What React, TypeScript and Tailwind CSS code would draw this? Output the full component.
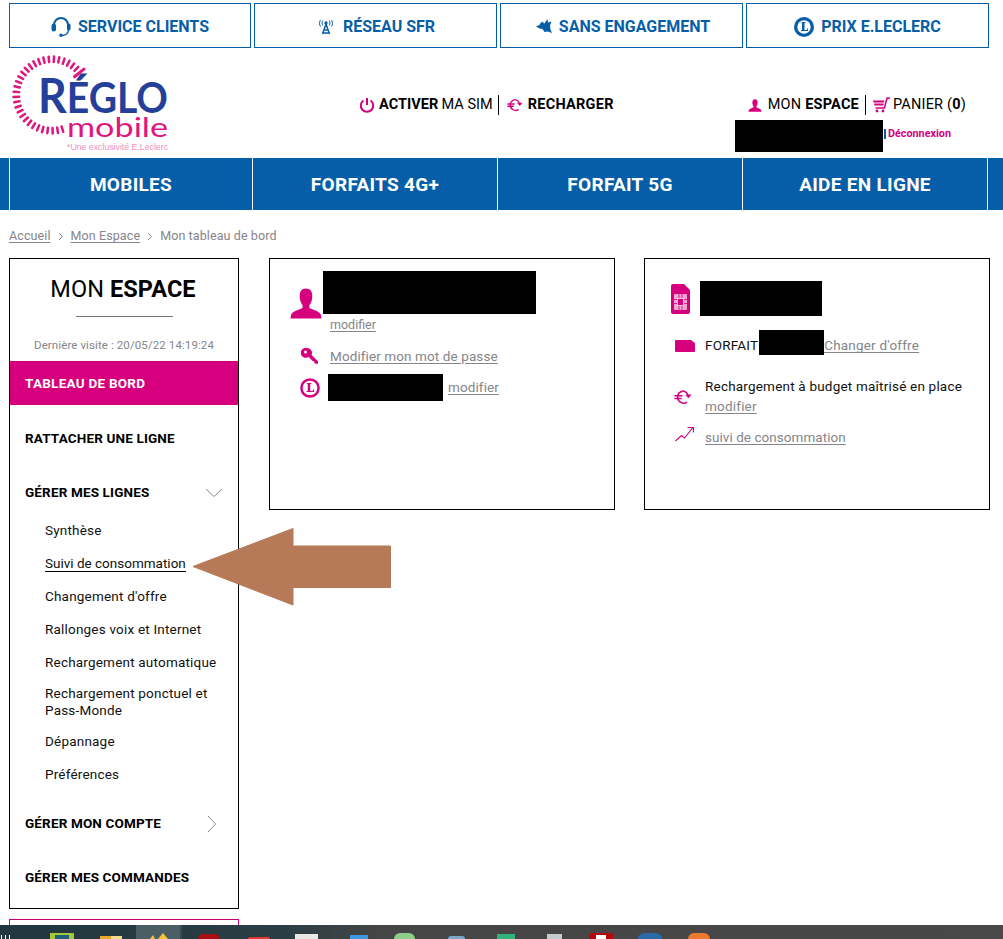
import React from "react";

const PINK = "#d6007f";

function Person({ className = "" }: { className?: string }) {
  return (
    <svg viewBox="0 0 32 32" className={className} fill="currentColor">
      <path d="M16 0.500c4.500 0 6.500 3 6.500 8 0 4-1.200 7-3 9.200v2.800c2 2 10.500 3 12 7.500l.5 3.500H0l.5-3.500C2 23.500 10.500 22.500 12.500 20.500v-2.800C10.700 15.500 9.500 12.500 9.500 8.500c0-5 2-8 6.500-8z" />
    </svg>
  );
}

function Euro({ className = "" }: { className?: string }) {
  return (
    <svg viewBox="0 0 20 20" className={className} fill="none" stroke="currentColor" strokeWidth="1.700">
      <path d="M9.500 3.500A6.800 6.800 0 0 0 4 10a6.800 6.800 0 0 0 10.500 5.700" />
      <path d="M9 3.300a6.800 6.800 0 0 1 6.500 4.700" />
      <path d="M0.500 8.700h9M0.500 11.600h8" />
      <path d="M12.500 7.300h7l-3.500 4z" fill="currentColor" stroke="none" />
    </svg>
  );
}

function LeclercL({ className = "", id }: { className?: string; id: string }) {
  return (
    <svg viewBox="0 0 24 24" className={className} aria-label={id}>
      <circle cx="12" cy="12" r="10.300" fill="none" stroke="currentColor" strokeWidth="3" />
      <path d="M8.500 6h5v1.200h-1.200v8.300h3.200v-1.800h1.300v3.100H8v-1.300h1.300V7.200H8.500z" fill="currentColor" />
    </svg>
  );
}

function TopButton({ icon, label, w }: { icon: React.ReactNode; label: string; w: string }) {
  return (
    <a className={`${w} h-[45px] border border-[#075ea8] flex items-center justify-center gap-[7px] pt-[2px] text-[#075ea8] font-bold text-[16px] uppercase`}>
      {icon}
      <span>{label}</span>
    </a>
  );
}

function Logo() {
  const ticks = [];
  for (let i = 0; i < 32; i++) {
    const a = (-39 - i * 8) * (Math.PI / 180);
    const big = i === 0;
    const r1 = big ? 29 : 33;
    const r2 = big ? 41 : 38.500;
    ticks.push(
      <line
        key={i}
        x1={40 + r1 * Math.cos(a)}
        y1={40 + r1 * Math.sin(a)}
        x2={40 + r2 * Math.cos(a)}
        y2={40 + r2 * Math.sin(a)}
        stroke="#e0157f"
        strokeWidth={big ? 3 : 2.500}
        strokeLinecap="round"
      />
    );
  }
  return (
    <svg width="160" height="98" viewBox="0 0 160 98" className="block overflow-visible">
      {ticks}
      <text x="26" y="58" fontFamily="Lato, 'Liberation Sans', sans-serif" fontWeight="700" fontSize="42" fill="#24409a" textLength="130" lengthAdjust="spacingAndGlyphs">
        <tspan fontSize="48">R</tspan>ÉGLO
      </text>
      <text x="55" y="82" fontFamily="Lato, 'Liberation Sans', sans-serif" fontWeight="400" fontSize="27" fill="#e0157f" textLength="101" lengthAdjust="spacingAndGlyphs">mobile</text>
      <text x="55" y="95" fontFamily="'Liberation Sans', sans-serif" fontSize="9" fill="#eb8fbe" textLength="101" lengthAdjust="spacingAndGlyphs">*Une exclusivité E.Leclerc</text>
    </svg>
  );
}

function SubItem({ children, active, className = "" }: { children: React.ReactNode; active?: boolean; className?: string }) {
  return (
    <div className={`pl-[35px] text-[13.500px] leading-[17px] tracking-[0.2px] text-[#111] ${className}`}>
      <span className={active ? "border-b border-black" : ""}>{children}</span>
    </div>
  );
}

function MainItem({ children, icon, className = "" }: { children: React.ReactNode; icon?: React.ReactNode; className?: string }) {
  return (
    <div className={`flex items-center justify-between pl-[15px] pr-[15px] font-bold text-[13.500px] text-black tracking-[0.15px] ${className}`}>
      <span>{children}</span>
      {icon}
    </div>
  );
}

function GreyLink({ children, className = "" }: { children: React.ReactNode; className?: string }) {
  return <a className={`text-[#85858a] underline underline-offset-2 decoration-[#85858a] ${className}`}>{children}</a>;
}

const Chevron = () => (
  <svg width="6" height="9" viewBox="0 0 6 9" fill="none" stroke="#85858a" className="mx-[7px]">
    <path d="M1 1l3.500 3.500L1 8" />
  </svg>
);

export default function App() {
  return (
    <div className="relative h-[939px] w-[1003px] overflow-hidden bg-white font-['Roboto',_'Liberation_Sans',_sans-serif] text-black">
      {/* Top buttons */}
      <div className="flex gap-[3px] pl-[9px] pt-[3px]">
        <TopButton
          w="w-[242px]"
          label="Service clients"
          icon={
            <svg width="20" height="20" viewBox="0 0 20 20" fill="none" stroke="#075ea8">
              <path d="M3 9.500V8a7 7 0 0 1 14 0v1.500" strokeWidth="2" />
              <path d="M17.500 13c-.5 3.500-3 5.500-6.500 5.500" strokeWidth="1.500" />
              <rect x="0.500" y="6.500" width="4.500" height="8" rx="2.200" fill="#075ea8" stroke="none" />
              <rect x="16" y="6.500" width="3.500" height="7" rx="1.700" fill="#075ea8" stroke="none" />
              <circle cx="10" cy="18.300" r="1.700" fill="#075ea8" stroke="none" />
            </svg>
          }
        />
        <TopButton
          w="w-[243px]"
          label="Réseau SFR"
          icon={
            <svg width="16" height="16" viewBox="0 0 16 16" fill="none" stroke="#075ea8" className="ml-[2px] mr-[2px]">
              <path d="M8 5l-3.500 10M8 5l3.500 10M6 11h4M5.500 14h5" strokeWidth="1.500" />
              <circle cx="8" cy="4" r="1.700" fill="#075ea8" stroke="none" />
              <path d="M4.800 1.500c-1 1.500-1 3.500 0 5M11.200 1.500c1 1.500 1 3.500 0 5M2.500 1c-1.300 2-1.300 4.500 0 6.500M13.500 1c1.300 2 1.300 4.500 0 6.500" strokeWidth="1" />
            </svg>
          }
        />
        <TopButton
          w="w-[243px]"
          label="Sans engagement"
          icon={
            <svg width="16" height="15" viewBox="0 0 16 15" fill="#075ea8" className="ml-[3px]">
              <path d="M0 7.500l3.500-1.500 1-2L7 2.500l1 2.500 3.500-5 .5 3.500L15.500 2.500 14 6.500l.5 4 1.500 3.500-4.500-1.500-3 .5-2-3L3.500 9.500z" />
            </svg>
          }
        />
        <TopButton
          w="w-[243px]"
          label="Prix E.Leclerc"
          icon={
            <svg width="20" height="20" viewBox="0 0 20 20">
              <circle cx="10" cy="10" r="10" fill="#075ea8" />
              <circle cx="10" cy="10" r="6.700" fill="#fff" />
              <path d="M7.500 5h4v1h-1v7h2.500v-1.500h1V14H7v-1h1V6h-.5z" fill="#075ea8" />
            </svg>
          }
        />
      </div>

      {/* Header */}
      <div className="flex h-[110px] items-start">
        <div className="ml-[12px] mt-[7px] w-[160px] shrink-0">
          <Logo />
        </div>
        <div className="ml-[187px] mt-[47px] flex h-[20px] items-center text-[14.500px] tracking-[0.05px]">
          <svg width="16" height="16" viewBox="0 0 16 16" fill="none" stroke={PINK} strokeWidth="2" className="mr-[4px]">
            <path d="M8 1v7" />
            <path d="M4.500 3.500a6.200 6.200 0 1 0 7 0" />
          </svg>
          <b>ACTIVER</b>
          <span className="ml-[3px]">MA SIM</span>
          <span className="ml-[5px] mr-[8px] h-[20px] w-px bg-black" />
          <Euro className="mr-[5px] h-[16px] w-[16px] text-[#d6007f]" />
          <b className="tracking-[0.25px]">RECHARGER</b>
        </div>
        <div className="ml-auto mr-[37px] mt-[47px] flex flex-col items-end">
          <div className="flex h-[20px] items-center text-[14.500px] tracking-[0.2px]">
            <Person className="mr-[6px] h-[13px] w-[14px] text-[#d6007f]" />
            <span>MON</span>
            <b className="ml-[4px]">ESPACE</b>
            <span className="mx-[6px] h-[20px] w-px bg-black" />
            <svg width="18" height="16" viewBox="0 0 18 16" className="mr-[3px]" fill="none" stroke={PINK}>
              <path d="M18 1h-3l-2.500 10H3.500" strokeWidth="1.500" />
              <path d="M1 3.500h11.500l-.5 2H1.500zM2 6.500h9.800l-.4 2H2.500z" fill={PINK} stroke="none" />
              <circle cx="5" cy="14" r="1.400" fill={PINK} stroke="none" />
              <circle cx="11" cy="14" r="1.400" fill={PINK} stroke="none" />
            </svg>
            <span>PANIER (<b>0</b>)</span>
          </div>
          <div className="mr-[15px] mt-[5px] flex h-[32px] items-center">
            <div className="h-[32px] w-[148px] bg-black" />
            <span className="mb-[4px] ml-px h-[10px] w-[2px] bg-[#075ea8]" />
            <span className="mb-[4px] ml-[2px] text-[10.800px] font-bold text-[#d6007f]">Déconnexion</span>
          </div>
        </div>
      </div>

      {/* Main nav */}
      <nav className="flex h-[52px] bg-[#075ea8] text-[19px] font-bold uppercase tracking-[0.3px] text-white">
        <div className="w-[9px]" />
        {[
          ["Mobiles", "w-[243px]"],
          ["Forfaits 4G+", "w-[245px]"],
          ["Forfait 5G", "w-[245px]"],
          ["Aide en ligne", "w-[245px]"],
        ].map(([label, w]) => (
          <div key={label} className={`${w} flex items-center justify-center border-l border-white pt-[3px]`}>
            {label}
          </div>
        ))}
        <div className="flex-1 border-l border-white" />
      </nav>

      {/* Breadcrumb */}
      <div className="ml-[9px] mt-[18px] flex h-[17px] items-center text-[12.500px] tracking-[0.1px] text-[#85858a]">
        <GreyLink>Accueil</GreyLink>
        <Chevron />
        <GreyLink>Mon Espace</GreyLink>
        <Chevron />
        <span>Mon tableau de bord</span>
      </div>

      {/* Body */}
      <div className="mt-[13px] flex items-start pl-[9px]">
        {/* Sidebar */}
        <div className="w-[230px] shrink-0">
          <aside className="h-[651px] border border-black">
            <div className="pr-[2px] pt-[15px] text-center text-[23.500px] leading-[30px] tracking-[0.1px]">
              MON <b>ESPACE</b>
            </div>
            <div className="mx-auto mt-[12px] h-px w-[97px] bg-[#777]" />
            <div className="mt-[20px] text-center text-[11.500px] leading-[16px] tracking-[0.1px] text-[#85858a]">
              Dernière visite : 20/05/22 14:19:24
            </div>
            <div className="mt-[8px] flex h-[44px] items-center bg-[#d6007f] pl-[15px] text-[13.500px] font-bold tracking-[0.25px] text-white">
              TABLEAU DE BORD
            </div>
            <MainItem className="mt-[25px] h-[17px]">RATTACHER UNE LIGNE</MainItem>
            <MainItem
              className="mt-[37px] h-[17px]"
              icon={
                <svg width="18" height="10" viewBox="0 0 18 10" fill="none" stroke="#888">
                  <path d="M1 1l8 7.500L17 1" />
                </svg>
              }
            >
              GÉRER MES LIGNES
            </MainItem>
            <SubItem className="mt-[21px]">Synthèse</SubItem>
            <SubItem className="mt-[16px] tracking-normal" active>Suivi de consommation</SubItem>
            <SubItem className="mt-[16px]">Changement d'offre</SubItem>
            <SubItem className="mt-[16px]">Rallonges voix et Internet</SubItem>
            <SubItem className="mt-[16px]">Rechargement automatique</SubItem>
            <SubItem className="mt-[14px] pr-[10px]">Rechargement ponctuel et Pass-Monde</SubItem>
            <SubItem className="mt-[14px]">Dépannage</SubItem>
            <SubItem className="mt-[16px]">Préférences</SubItem>
            <MainItem
              className="mt-[32px] h-[17px]"
              icon={
                <svg width="10" height="18" viewBox="0 0 10 18" fill="none" stroke="#888" className="mr-[6px]">
                  <path d="M1 1l7.500 8L1 17" />
                </svg>
              }
            >
              GÉRER MON COMPTE
            </MainItem>
            <MainItem className="mt-[37px] h-[17px]">GÉRER MES COMMANDES</MainItem>
          </aside>
          <div className="mt-[10px] h-[20px] border border-[#c7007d]" />
        </div>

        {/* Card 1 */}
        <section className="ml-[30px] h-[252px] w-[346px] shrink-0 border border-black text-[13.500px] tracking-[0.1px]">
          <div className="ml-[20px] mt-[12px] flex h-[43px]">
            <Person className="mt-[17px] h-[31px] w-[32px] text-[#d6007f]" />
            <div className="ml-[1px] h-[43px] w-[213px] bg-black" />
          </div>
          <div className="ml-[60px] mt-[2px] h-[17px] text-[12.500px] leading-[17px] tracking-normal">
            <GreyLink>modifier</GreyLink>
          </div>
          <div className="mt-[13px] flex h-[20px] items-center pl-[31px]">
            <svg width="18" height="18" viewBox="0 0 18 18" fill={PINK}>
              <path fillRule="evenodd" d="M6 1a5 5 0 0 1 4.600 7l6.400 6.300v2.400h-2.500l-1.300-1.300v-1.200h-1.300l-4.300-4.300A5 5 0 1 1 6 1zM4.500 3.500a1.500 1.500 0 1 0 0 3 1.500 1.500 0 0 0 0-3z" />
            </svg>
            <GreyLink className="ml-[11px]">Modifier mon mot de passe</GreyLink>
          </div>
          <div className="mt-[8px] flex items-center pl-[30px]">
            <LeclercL id="E.Leclerc" className="h-[20px] w-[20px] text-[#d6007f]" />
            <div className="ml-[8px] h-[27px] w-[115px] bg-black" />
            <GreyLink className="ml-[5px]">modifier</GreyLink>
          </div>
        </section>

        {/* Card 2 */}
        <section className="ml-[29px] h-[252px] w-[346px] shrink-0 border border-black text-[13.500px] tracking-[0.2px]">
          <div className="flex items-start pl-[26px] pt-[22px]">
            <svg width="19" height="30" viewBox="0 0 19 30" className="mt-[3px]">
              <path d="M2 0h11l6 6v22a2 2 0 0 1-2 2H2a2 2 0 0 1-2-2V2a2 2 0 0 1 2-2z" fill={PINK} />
              <rect x="3" y="10" width="13" height="16" rx="1" fill="#f4a6d3" />
              <rect x="6.500" y="14.500" width="6" height="7" fill={PINK} stroke="#fff" strokeWidth="0.600" />
              <path d="M8 10v4M11 10v4M8 22v4M11 22v4M3 15.500h3M3 19.500h3M13 15.500h3M13 19.500h3" stroke={PINK} strokeWidth="0.800" />
            </svg>
            <div className="ml-[10px] h-[35px] w-[122px] bg-black" />
          </div>
          <div className="mt-[14px] flex h-[25px] items-center pl-[30px]">
            <svg width="20" height="12" viewBox="0 0 20 12" fill={PINK} className="mt-[6px]">
              <path d="M1 0h15l4 3v8a1 1 0 0 1-1 1H1a1 1 0 0 1-1-1V1a1 1 0 0 1 1-1z" />
            </svg>
            <span className="ml-[10px] mt-[6px] text-[#111]">FORFAIT</span>
            <div className="ml-[1px] h-[25px] w-[65px] bg-black" />
            <GreyLink className="mt-[6px]">Changer d'offre</GreyLink>
          </div>
          <div className="mt-[21px] flex pl-[29px]">
            <Euro className="mt-[12px] h-[18px] w-[18px] text-[#d6007f]" />
            <div className="ml-[13px] leading-[20px]">
              <div className="text-[#111]">Rechargement à budget maîtrisé en place</div>
              <GreyLink>modifier</GreyLink>
            </div>
          </div>
          <div className="mt-[11px] flex items-center pl-[30px]">
            <svg width="19" height="16" viewBox="0 0 19 16" fill="none" stroke={PINK} strokeWidth="1.200" className="-mt-[6px]">
              <path d="M0.500 15l6-5.500 3 2.500L17.500 2" />
              <path d="M12.500 1.500h6v5" />
            </svg>
            <GreyLink className="ml-[11px] tracking-[0.05px]">suivi de consommation</GreyLink>
          </div>
        </section>
      </div>

      {/* Annotation arrow over the page */}
      <svg width="200" height="80" viewBox="0 0 200 80" className="absolute left-[192px] top-[527px]">
        <path d="M1 39.500L101 1.500V19H198.500V60.500H101V78z" fill="#b67a58" stroke="#b67a58" strokeLinejoin="round" strokeWidth="1" />
      </svg>

      {/* Desktop taskbar cut off by the screenshot */}
      <div className="absolute inset-x-0 bottom-0 h-[14px] bg-[linear-gradient(90deg,#21363e_0%,#2a3d44_28%,#454545_38%,#484848_100%)]">
        <div className="absolute left-[136px] top-0 h-[14px] w-[44px] bg-[#4a5e63]" />
        <div className="absolute left-[180px] top-0 h-[14px] w-[2px] bg-[#3a4a4f]" />
        <div className="absolute left-[1px] top-[10px] flex gap-[3px]">
          <span className="h-[4px] w-px bg-white" />
          <span className="h-[4px] w-px bg-white" />
          <span className="h-[4px] w-px bg-white" />
        </div>
        <div className="relative flex items-start">
          <span className="ml-[50px] mt-[8px] flex h-[6px] w-[24px] justify-center bg-[#a4c639]"><span className="mt-[2px] h-[4px] w-[14px] bg-[#1f5f7a]" /></span>
          <span className="ml-[26px] mt-[11px] h-[3px] w-[22px] bg-[linear-gradient(90deg,#e8a92c_50%,#f4d98a_50%)]" />
          <svg width="22" height="6" viewBox="0 0 22 6" className="ml-[28px] mt-[8px]"><path d="M0 6l3-4 2 4zM8 6l5-6 5 6z" fill="#f5c33a" /></svg>
          <span className="ml-[26px] mt-[9px] h-[5px] w-[22px] rounded-t-md bg-[#a80d10]" />
          <span className="ml-[28px] mt-[12px] h-[2px] w-[22px] rounded-t-full bg-[#e53a2f]" />
          <span className="ml-[25px] mt-[9px] h-[5px] w-[23px] bg-[#e8e8e4]" />
          <span className="ml-[32px] mt-[10px] h-[4px] w-[18px] bg-[#3e97dd]" />
          <span className="ml-[26px] mt-[8px] h-[6px] w-[21px] rounded-t-full bg-[#8fce8a]" />
          <span className="ml-[33px] mt-[11px] h-[3px] w-[17px] rounded-t-full bg-[#7fa8c8]" />
          <span className="ml-[32px] mt-[9px] h-[5px] w-[18px] bg-[#2fb27c]" />
          <span className="ml-[32px] mt-[9px] h-[5px] w-[15px] bg-[#c5ccd0]" />
          <span className="ml-[27px] mt-[8px] flex h-[6px] w-[24px] justify-center bg-[#b5090f]"><span className="mt-[2px] h-[4px] w-[10px] bg-white" /></span>
          <span className="ml-[25px] mt-[8px] h-[6px] w-[24px] rounded-t-md bg-[#2a6aa6]" />
          <span className="ml-[26px] mt-[8px] h-[6px] w-[22px] rounded-t-full bg-[#ec7a2d]" />
        </div>
      </div>
    </div>
  );
}
